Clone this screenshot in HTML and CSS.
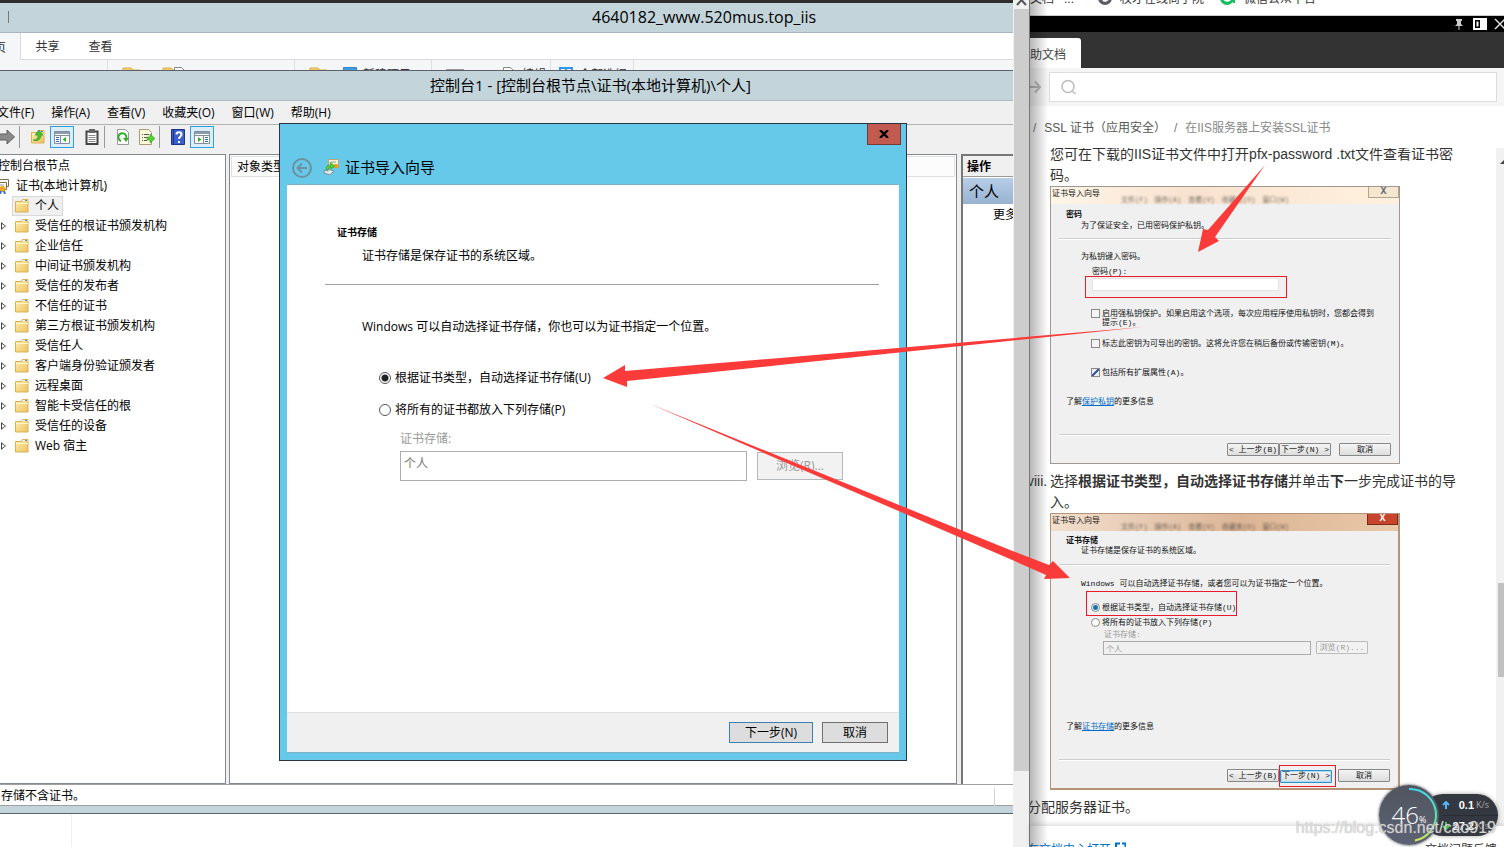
FILE: index.html
```html
<!DOCTYPE html>
<html lang="zh-CN">
<head>
<meta charset="utf-8">
<title>证书导入向导</title>
<link rel="stylesheet" href="styles.css">
</head>
<body>
<svg class="defs" aria-hidden="true">
  <defs>
    <linearGradient id="fold" x1="0" y1="0" x2="1" y2="1"><stop offset="0" stop-color="#fff0b4"/><stop offset="1" stop-color="#ecc25c"/></linearGradient>
    <linearGradient id="ring" x1="0" y1="0" x2="0" y2="1"><stop offset="0" stop-color="#3fd8e8"/><stop offset=".6" stop-color="#5fe3a8"/><stop offset="1" stop-color="#d5e85a"/></linearGradient>
    <symbol id="folder" viewBox="0 0 16 16"><path d="M1.500 3.500h6l1-2h5.500v12.500h-12.500z" fill="url(#fold)" stroke="#d8b15a"/><path d="M9 2.500h4.500" stroke="#fff"/><path d="M11 2.500h2" stroke="#3a8be0"/><path d="M2 5.500h12" stroke="#fff3c4"/></symbol>
    <symbol id="pane" viewBox="0 0 16 16"><path d="M.5 2.500h15v12h-15z" fill="#fff" stroke="#7f8ea3"/><path d="M1 4h14" stroke="#8d9bb0" stroke-width="2"/><path d="M1 6.500h14" stroke="#7f8ea3"/></symbol>
  </defs>
</svg>
<main class="screen">
  <section class="remote">
    <div class="explorer">
      <div class="explorer-title"><i class="tick"></i><span>4640182_www.520mus.top_iis</span></div>
      <nav class="explorer-tabs"><button class="tab-on">页</button><button>共享</button><button>查看</button></nav>
      <div class="ribbon">
        <div class="group g1"></div>
        <div class="group g2"><svg width="20" height="12"><path d="M1 1h8l2 2h7v9h-17z" fill="#f2cf72" stroke="#d9ae44"/></svg><svg width="26" height="12"><path d="M1 1h8l2 2h7v9h-17z" fill="#f2cf72" stroke="#d9ae44"/><path d="M12.500.5h7l4 4v8h-11z" fill="#fff" stroke="#888"/></svg></div>
        <div class="group g3"><svg width="20" height="12"><path d="M1 1h8l2 2h7v9h-17z" fill="#f2cf72" stroke="#d9ae44"/></svg><svg width="14" height="12"><path d="M.5.5h13v11h-13z" fill="#fff" stroke="#3c86bf"/><path d="M1 2h12" stroke="#3c9de0" stroke-width="2"/></svg><span>新建项目</span></div>
        <div class="group g4"><svg width="18" height="12"><path d="M0 3h18" stroke="#999" stroke-width="2"/></svg><svg width="14" height="12"><path d="M1.500.5h7l4 4v8h-11z" fill="#fff" stroke="#888"/></svg><span>编辑</span></div>
        <div class="group g5"><svg width="14" height="12"><path d="M1 1h12v10h-12zM7 1v10" fill="#fff" stroke="#3296ee" stroke-width="2"/></svg><span>全部选择</span></div>
      </div>
      <div class="explorer-body"><i></i></div>
    </div>

    <div class="console">
      <div class="console-title">控制台1 - [控制台根节点\证书(本地计算机)\个人]</div>
      <nav class="menu"><button>文件(F)</button><button>操作(A)</button><button>查看(V)</button><button>收藏夹(O)</button><button>窗口(W)</button><button>帮助(H)</button></nav>
      <div class="toolbar">
        <button class="first" aria-label="前进"><svg width="16" height="16"><path d="M0 5h8V1l7.500 7L8 15v-4H0z" fill="#8a8a8a" stroke="#5e5e5e"/></svg></button><i></i>
        <button aria-label="向上"><svg width="16" height="16"><use href="#folder"/><path d="M3 11c4 0 5-2 5-5h-3l4-5 4 5h-2c0 4-3 7-8 5z" fill="#43c232" stroke="#23881a" stroke-width=".6"/></svg></button>
        <button class="on" aria-label="控制台树"><svg width="16" height="16"><use href="#pane"/><path d="M6.500 7v7" stroke="#7f8ea3"/><path d="M2 8.500h3M2 10.500h3M2 12.500h3" stroke="#3b6db0"/><path d="M12 8v5L8.500 10.500z" fill="#2fae27"/></svg></button>
        <button class="gap" aria-label="剪贴板"><svg width="16" height="16"><path d="M2.500 2.500h11v12.500h-11z" fill="#fff" stroke="#444" stroke-width="2"/><path d="M5 0h6v4H5z" fill="#666"/><path d="M4.500 6.500h7M4.500 8.500h7M4.500 10.500h7M4.500 12.500h7" stroke="#888"/></svg></button><i></i>
        <button aria-label="刷新"><svg width="16" height="16"><path d="M2.500.5h8l3 3v12h-11z" fill="#fff" stroke="#999"/><path d="M6 12a4 4 0 1 1 5-2" fill="none" stroke="#2fae27" stroke-width="2"/><path d="M8 9h6l-3 4z" fill="#2fae27"/></svg></button>
        <button aria-label="导出列表"><svg width="16" height="16"><path d="M.5.5h9l3 3v12H.5z" fill="#fff9dc" stroke="#a59b78"/><path d="M3 5.500h1M5 5.500h5M3 8.500h1M5 8.500h3M3 11.500h1M5 11.500h3" stroke="#555"/><path d="M8 8h3V5l5 4.500-5 4.500v-3H8z" fill="#55d233" stroke="#2a9a1f" stroke-width=".6"/></svg></button><i></i>
        <button aria-label="帮助"><svg width="16" height="16"><path d="M1.500.5h13v15h-13z" fill="#3a5fcd" stroke="#1e3480"/><path d="M3.500 1v14" stroke="#1e3480"/><path d="M6.500 5.500c0-3 5-3 5 0 0 2-2.500 2-2.500 4.500M9 12v2" fill="none" stroke="#fff" stroke-width="2"/></svg></button>
        <button class="on" aria-label="操作窗格"><svg width="16" height="16"><use href="#pane"/><path d="M9.500 7v7" stroke="#7f8ea3"/><path d="M11 8.500h3M11 10.500h3M11 12.500h3" stroke="#3b6db0"/><path d="M4 8v5l3.500-2.500z" fill="#2fae27"/></svg></button>
      </div>
      <div class="panes">
        <ul class="tree">
          <li class="root">控制台根节点</li>
          <li class="store"><svg width="16" height="16"><path d="M5.500 1.500h9v7h-9z" fill="#fff" stroke="#806c48"/><path d="M.5 4.500h12v7H.5z" fill="#fff" stroke="#806c48"/><path d="M3 7h7" stroke="#999"/><circle cx="8.500" cy="11" r="3" fill="#eba623"/><path d="M7 13l-1 3M10 13l1 3" stroke="#2f6de0" stroke-width="2"/></svg>证书(本地计算机)</li>
          <li class="leaf"><span class="sel"><svg width="16" height="16"><use href="#folder"/></svg>个人</span></li>
          <li><b></b><svg width="16" height="16"><use href="#folder"/></svg>受信任的根证书颁发机构</li>
          <li><b></b><svg width="16" height="16"><use href="#folder"/></svg>企业信任</li>
          <li><b></b><svg width="16" height="16"><use href="#folder"/></svg>中间证书颁发机构</li>
          <li><b></b><svg width="16" height="16"><use href="#folder"/></svg>受信任的发布者</li>
          <li><b></b><svg width="16" height="16"><use href="#folder"/></svg>不信任的证书</li>
          <li><b></b><svg width="16" height="16"><use href="#folder"/></svg>第三方根证书颁发机构</li>
          <li><b></b><svg width="16" height="16"><use href="#folder"/></svg>受信任人</li>
          <li><b></b><svg width="16" height="16"><use href="#folder"/></svg>客户端身份验证颁发者</li>
          <li><b></b><svg width="16" height="16"><use href="#folder"/></svg>远程桌面</li>
          <li><b></b><svg width="16" height="16"><use href="#folder"/></svg>智能卡受信任的根</li>
          <li><b></b><svg width="16" height="16"><use href="#folder"/></svg>受信任的设备</li>
          <li><b></b><svg width="16" height="16"><use href="#folder"/></svg>Web 宿主</li>
        </ul>
        <div class="list"><div class="list-head">对象类型</div></div>
        <div class="actions"><div class="actions-head">操作</div><div class="actions-sel">个人</div><button class="more">更多操作</button></div>
      </div>
      <div class="status"><span>存储不含证书。</span><i></i></div>
    </div>

    <div class="wizard" role="dialog" aria-labelledby="wiz">
      <button class="close" aria-label="关闭"><svg width="10" height="8"><path d="M1 0l8 8M9 0l-8 8" stroke="#000" stroke-width="2.400"/></svg></button>
      <header>
        <svg width="20" height="20"><circle cx="10" cy="10" r="9" fill="none" stroke="#6e8f9e" stroke-width="2"/><path d="M15 10H6M10 5.500L5.500 10l4.500 4.500" fill="none" stroke="#6e8f9e" stroke-width="2"/></svg>
        <svg class="cert" width="16" height="16"><path d="M5.500.5h10v8h-10z" fill="#fdf6dc" stroke="#b5a67c"/><path d="M8 3h5" stroke="#999"/><circle cx="13" cy="7" r="2.200" fill="#e8a31f"/><path d="M1 12l4-2 6 2-4 4-6-2z" fill="#dce6ea" stroke="#7a8e98"/><path d="M3 11C3 6 6 5 8 6L7 3l5 4-4 3V8C6 8 5 9 5 12z" fill="#56cf3c" stroke="#2b9222" stroke-width=".6"/></svg>
        <h1 id="wiz">证书导入向导</h1>
      </header>
      <form class="wizard-body">
        <div class="page">
          <h2>证书存储</h2>
          <p class="sub">证书存储是保存证书的系统区域。</p>
          <hr>
          <p class="intro">Windows 可以自动选择证书存储，你也可以为证书指定一个位置。</p>
          <label class="opt"><input type="radio" name="s" checked>根据证书类型，自动选择证书存储(U)</label>
          <label class="opt opt2"><input type="radio" name="s">将所有的证书都放入下列存储(P)</label>
          <div class="where">
            <label for="store">证书存储:</label>
            <div class="where-row"><input id="store" type="text" value="个人" disabled><button type="button" disabled>浏览(R)...</button></div>
          </div>
        </div>
        <footer><button type="button" class="next">下一步(N)</button><button type="button" class="cancel">取消</button></footer>
      </form>
    </div>
  </section>

  <div class="bar"><svg width="15" height="9"><path d="M3 5l4.500-5 4.500 5" fill="none" stroke="#555" stroke-width="2"/></svg><i></i></div>

  <aside class="doc">
    <div class="marks"><span>文档</span><span class="m1">...</span><svg width="14" height="14"><circle cx="7" cy="7" r="7" fill="#5a5d66"/><path d="M5 9c2 2 5 0 6-3" stroke="#fff" fill="none" stroke-width="2"/></svg><span class="m2">权才在线商学院</span><svg width="16" height="14"><circle cx="7" cy="7" r="7" fill="#14bf5f"/><path d="M4 8c2 3 6 2 7-1" stroke="#fff" fill="none" stroke-width="2"/><path d="M14 4v8" stroke="#14bf5f" stroke-width="2"/></svg><span>微信公众平台</span></div>
    <div class="black"><svg width="12" height="12"><path d="M3 1h6v2H8v3l2 2H2l2-2V3H3zM5.500 8h1v4h-1z" fill="#ccc"/></svg><svg width="14" height="12"><path d="M0 0h14v12H0z" fill="#fff"/><path d="M2 2h5v8H2z" fill="#000"/><path d="M3.500 3.500h2v5h-2z" fill="#fff"/></svg><svg width="12" height="12"><path d="M1 1l10 10M11 1L1 11" stroke="#ddd" stroke-width="1.500"/></svg></div>
    <div class="doc-tabs"><button>助文档</button></div>
    <div class="search"><svg width="11" height="14"><path d="M0 7h10M5 1.500L10 7l-5 5.500" fill="none" stroke="#bbb" stroke-width="2"/></svg><label><svg width="16" height="16"><circle cx="7" cy="7.500" r="6" fill="none" stroke="#bbb" stroke-width="1.500"/><path d="M11 12l3.500 3" stroke="#bbb" stroke-width="1.500"/></svg><input type="text" aria-label="搜索"></label></div>
    <nav class="crumbs"><span>/</span><a href="#">SSL 证书（应用安全）</a><span>/</span><span class="here">在IIS服务器上安装SSL证书</span></nav>
    <div class="doc-main">
      <article>
        <p class="step">您可在下载的IIS证书文件中打开pfx-password .txt文件查看证书密码。</p>
        <figure class="thumb t1">
          <div class="thumb-title"><span>证书导入向导</span><em>文件(F)　操作(A)　查看(V)　收藏夹(O)　窗口(W)</em><b>X</b></div>
          <div class="thumb-body">
            <h3>密码</h3><p class="in1">为了保证安全，已用密码保护私钥。</p><hr>
            <p class="in1 key">为私钥键入密码。</p>
            <label class="in2 pw" for="pw">密码(P):</label>
            <div class="red pwbox"><input id="pw" type="password"></div>
            <label class="check c1"><input type="checkbox"><span>启用强私钥保护。如果启用这个选项，每次应用程序使用私钥时，您都会得到<br>提示(E)。</span></label>
            <label class="check c2"><input type="checkbox"><span>标志此密钥为可导出的密钥。这将允许您在稍后备份或传输密钥(M)。</span></label>
            <label class="check c3"><input type="checkbox" checked><span>包括所有扩展属性(A)。</span></label>
            <p class="learn">了解<a href="#">保护私钥</a>的更多信息</p><hr class="low">
            <div class="thumb-btns"><button>&lt; 上一步(B)</button><button>下一步(N) &gt;</button><button class="c">取消</button></div>
          </div>
        </figure>
        <p class="step item"><span class="num">viii.</span>选择<strong>根据证书类型，自动选择证书存储</strong>并单击<strong>下</strong>一步完成证书的导入。</p>
        <figure class="thumb t2">
          <div class="thumb-title"><span>证书导入向导</span><em>文件(F)　操作(A)　查看(V)　收藏夹(O)　窗口(W)</em><b>X</b></div>
          <div class="thumb-body">
            <h3>证书存储</h3><p class="in1">证书存储是保存证书的系统区域。</p><hr>
            <p class="in1 key">Windows 可以自动选择证书存储，或者您可以为证书指定一个位置。</p>
            <div class="red rbox"><label class="check"><input type="radio" name="t" checked><span>根据证书类型，自动选择证书存储(U)</span></label></div>
            <label class="check r2"><input type="radio" name="t"><span>将所有的证书放入下列存储(P)</span></label>
            <label class="in3" for="st2">证书存储:</label>
            <div class="st-row"><input id="st2" type="text" value="个人" disabled><button disabled>浏览(R)...</button></div>
            <p class="learn">了解<a href="#">证书存储</a>的更多信息</p><hr class="low">
            <div class="thumb-btns"><button>&lt; 上一步(B)</button><span class="red"><button class="def">下一步(N) &gt;</button></span><button>取消</button></div>
          </div>
        </figure>
        <p class="step last">分配服务器证书。</p>
      </article>
      <div class="doc-scroll"><i></i></div>
    </div>
    <footer class="doc-foot"><a href="#">在文档中心打开 <svg width="11" height="11"><path d="M5 1.500H1v9h9V7M7 1.500h3.500V5" fill="none" stroke="#0070cc" stroke-width="2"/></svg></a><span>文档问题反馈</span></footer>
  </aside>

  <svg class="arrows" width="1504" height="847" aria-hidden="true"><g fill="#fb3a3a"><path d="M1265 165L1208 230l-5-1-5 23 21-11-4-4z"/><path d="M1143 327L780 358l-155 13v-6l-22 13 24 9v-6l153-16z"/><path d="M649 403.500L1010 550l39 15 4-4 17 17-26 1 2-4-36-16z"/></g></svg>

  <div class="meter">
    <div class="dial"><svg width="60" height="60"><path d="M30 4A26 26 0 0 1 36 55.500" fill="none" stroke="url(#ring)" stroke-width="2"/></svg><span>46</span><small>%</small></div>
    <div class="rates"><div><svg width="8" height="8"><path d="M4 8V1M1 4l3-3 3 3" fill="none" stroke="#4fb8ff" stroke-width="2"/></svg><b>0.1</b><small>K/s</small></div><div><svg width="8" height="8"><path d="M4 0v7M1 4l3 3 3-3" fill="none" stroke="#3ecf3e" stroke-width="2"/></svg><b>27.2</b><small>K/s</small></div></div>
  </div>
  <div class="mark">https://blog.csdn.net/cao919</div>
</main>
</body>
</html>
```

FILE: styles.css
```css
* { box-sizing: border-box; }
body { margin: 0; background: #fff; color: #000; font: 12px/16px "Open Sans", "Noto Sans CJK SC", sans-serif; }
h1, h2, h3, p, ul, figure, hr { margin: 0; padding: 0; }
button, input { font: inherit; color: inherit; margin: 0; padding: 0; }
button { border: 0; background: none; white-space: nowrap; }
svg { display: block; flex: none; }
.defs { position: absolute; width: 0; height: 0; }
.screen { position: relative; display: flex; height: 100vh; overflow: hidden; }

/* remote desktop */
.remote { position: relative; flex: 1; min-width: 0; overflow: hidden; background: #2e2e2e; }
.explorer { height: 100%; padding-top: 3px; display: flex; flex-direction: column; }
.explorer-title { position: relative; flex: none; height: 30px; padding-left: 592px; background: #c3d5db; border-bottom: 1px solid #a9b6bf; font-size: 16px; line-height: 28px; }
.tick { position: absolute; left: 8px; top: 8px; width: 1px; height: 12px; background: #777; }
.explorer-tabs { display: flex; flex: none; height: 27px; background: #fff; border-bottom: 1px solid #d8dadc; color: #333; }
.explorer-tabs button { width: 53px; padding-top: 2px; }
.explorer-tabs .tab-on { display: flex; justify-content: flex-end; align-items: center; width: 21px; height: 27px; padding-right: 14px; background: #f5f6f7; border-right: 1px solid #d8dadc; }
.ribbon { display: flex; flex: none; height: 11px; overflow: hidden; background: #f5f6f7; color: #333; }
.group { display: flex; gap: 6px; padding: 7px 0 0 14px; border-right: 1px solid #dcdfe3; line-height: 16px; }
.group span { white-space: nowrap; }
.g1 { width: 108px; }
.g2 { width: 187px; gap: 20px; }
.g3 { width: 137px; gap: 14px; }
.g3 span { margin-left: -8px; }
.g4 { width: 119px; }
.g4 svg + svg { margin-left: 32px; }
.g5 { width: 83px; padding-left: 8px; }
.explorer-body { flex: 1; display: flex; background: #fff; }
.explorer-body i { width: 72px; border-right: 1px solid #f0f0f2; }

.console { position: absolute; left: 0; right: 0; top: 70px; bottom: 33px; display: flex; flex-direction: column; background: #f0f0f0; border-top: 1px solid #5d606b; border-bottom: 1px solid #53646c; }
.console-title { flex: none; height: 30px; padding-left: 430px; background: #c3d5db; border-bottom: 1px solid #adb9c3; font-size: 15px; line-height: 29px; white-space: nowrap; }
.menu { display: flex; flex: none; gap: 17px; height: 24px; margin-left: -3px; border-bottom: 1px solid #b2b2b2; }
.toolbar { display: flex; flex: none; height: 29px; padding-top: 1px; }
.toolbar button { display: flex; width: 24px; height: 22px; align-items: center; justify-content: center; }
.toolbar .first { margin-left: -5px; }
.toolbar .gap { margin-left: 6px; }
.toolbar i { width: 1px; height: 22px; margin-right: 6px; background: #999; }
.toolbar .on { background: #dcedf8; border: 1px solid #2da0dd; }
.panes { display: flex; flex: 1; gap: 3px; min-height: 0; }
.tree { width: 226px; flex: none; padding-top: 1px; list-style: none; background: #fff; border: solid #828790; border-width: 1px 1px 1px 0; }
.tree li { display: flex; height: 20px; align-items: center; gap: 5px; padding-left: 1px; white-space: nowrap; }
.tree li.root { margin-left: -3px; }
.tree li.store { margin-left: -7px; gap: 6px; }
.tree li.leaf { padding-left: 12px; }
.tree b { width: 8px; height: 8px; background: #444; clip-path: polygon(0 0, 5px 4px, 0 8px, 0 0, 1px 2px, 1px 6px, 4px 4px, 1px 2px); }
.sel { display: flex; gap: 5px; align-items: center; height: 20px; padding: 0 3px 0 1px; background: #f0f0f0; border: 1px solid #d9d9d9; }
.list { flex: 1; background: #fff; border: 1px solid #828790; padding: 1px; }
.list-head { height: 21px; padding-left: 5px; border: 1px solid #e0e0e0; background: #fcfcfc; line-height: 20px; }
.actions { width: 52px; flex: none; margin-left: 1px; overflow: hidden; background: #fff; border: solid #777; border-width: 2px 0 0 2px; }
.actions-head { height: 21px; padding-left: 4px; background: #f0f0f0; border-bottom: 1px solid #999; font-weight: bold; line-height: 22px; }
.actions-sel { height: 26px; margin-top: 1px; padding-left: 6px; background: linear-gradient(#b6cee8, #98b2d0); font-size: 15px; line-height: 26px; }
.more { margin: 3px 0 0 30px; }
.status { display: flex; flex: none; justify-content: space-between; height: 29px; padding: 3px 18px 0 1px; background: #fff; border-top: 1px solid #a0a0a0; border-bottom: 7px solid #c3d5db; box-shadow: inset 0 -1px #a0a0a0; }
.status i { width: 1px; background: #d5d5d5; }

.wizard { position: absolute; left: 279px; top: 123px; width: 628px; height: 638px; display: flex; flex-direction: column; padding: 0 7px 7px; background: #66c9ea; border: 1px solid #2b3440; }
.wizard header { display: flex; height: 60px; align-items: flex-end; padding: 0 0 6px 5px; }
.cert { margin: 0 6px 3px 11px; }
.wizard h1 { font-size: 15px; line-height: 22px; font-weight: normal; }
.close { position: absolute; right: 5px; top: 0; width: 34px; height: 21px; display: grid; place-items: center; background: #c25a50; border: 1px solid #723c3a; border-top: 0; }
.wizard-body { flex: 1; display: flex; flex-direction: column; background: #fff; border: solid #7fb0c6; border-width: 1px 0; }
.page { flex: 1; padding: 39px 20px 0 38px; }
.page h2 { margin-left: 12px; font-size: 10px; line-height: 16px; }
.page .sub { margin: 8px 0 20px 37px; }
.page hr { border: 0; border-top: 1px solid #a0a0a0; }
.page .intro { margin: 34px 0 35px 37px; }
.opt { display: flex; align-items: center; gap: 4px; margin-left: 54px; }
.opt2 { margin-top: 16px; }
input[type="radio"] { appearance: none; flex: none; width: 12px; height: 12px; border: 1px solid #555; border-radius: 50%; background: #fff; }
input[type="radio"]:checked { background: radial-gradient(circle, #222 0 3px, #fff 4px); }
.where { margin: 13px 0 0 75px; color: #999; }
.where > label { display: block; }
.where-row { display: flex; align-items: center; gap: 10px; margin-top: 4px; }
.where-row input { width: 347px; height: 30px; padding: 0 3px 6px; border: 1px solid #abadb3; background: #fff; color: #777; }
.where-row button { width: 86px; height: 28px; border: 1px solid #b5b8bb; background: #f2f2f2; color: #999; }
.wizard-body footer { display: flex; justify-content: flex-end; gap: 9px; height: 40px; padding: 9px 11px; background: #f0f0f0; border-top: 1px solid #dfdfdf; }
.wizard-body footer button { width: 66px; height: 21px; background: #ddd; border: 1px solid #707070; }
.wizard-body footer .next { width: 84px; border-color: #3c7fb1; }

.bar { flex: none; width: 17px; padding-left: 1px; display: flex; flex-direction: column; background: #f0f0f0; border-right: 1px solid #777; }
.bar i { height: 90%; background: #cdcdcd; }

/* documentation panel */
.doc { position: relative; flex: none; width: 474px; display: flex; flex-direction: column; background: #fff; font-family: "Liberation Sans", "Noto Sans CJK SC", sans-serif; }
.doc::before { content: ""; position: absolute; inset: 0 auto 0 0; width: 18px; background: linear-gradient(90deg, #00000048, #0000); }
.marks { display: flex; flex: none; height: 16px; overflow: hidden; border-bottom: 1px solid #ccc; color: #333; }
.marks > * { margin: -9px 8px 0 0; white-space: nowrap; }
.marks .m1 { margin-left: 2px; margin-right: 24px; }
.marks .m2 { margin-right: 16px; }
.black { display: flex; flex: none; gap: 8px; justify-content: flex-end; align-items: center; height: 16px; background: #000; }
.black svg:last-child { margin: 0 -2px 0 -1px; }
.doc-tabs { display: flex; flex: none; height: 36px; padding-top: 6px; background: #333; }
.doc-tabs button { display: flex; justify-content: flex-end; align-items: center; width: 51px; padding: 3px 15px 0 0; background: #fff; border-radius: 0 3px 0 0; color: #444; }
.search { display: flex; flex: none; height: 38px; padding: 4px 7px 4px 0; gap: 8px; align-items: center; background: #f5f5f5; }
.search label { flex: 1; display: flex; align-items: center; height: 30px; padding-left: 11px; background: #fff; border: 1px solid #ddd; }
.search input { flex: 1; border: 0; outline: 0; }
.crumbs { display: flex; flex: none; height: 42px; padding-top: 2px; align-items: center; gap: 8px; padding-left: 3px; color: #777; white-space: nowrap; }
.crumbs a { color: #555; text-decoration: none; }
.crumbs .here { color: #888; }
.doc-main { flex: 1; min-height: 0; display: flex; overflow: hidden; }
article { flex: 1; padding: 0 38px 0 20px; margin-top: -4px; }
.step { position: relative; font-size: 14px; line-height: 21px; color: #333; word-break: break-all; }
.item { margin-top: 7px; }
.num { position: absolute; left: -23px; }
.last { margin: 7px 0 0 -23px; }
.doc-scroll { width: 8px; background: #f1f1f1; display: flex; flex-direction: column; }
.doc-scroll::before { content: ""; margin: 8px 0 0 4px; border: solid transparent; border-width: 0 4px 4px; border-bottom-color: #444; height: 4px; }
.doc-scroll i { height: 94px; margin: 419px 0 0 2px; background: #c1c1c1; }
.doc-foot { display: flex; flex: none; justify-content: space-between; height: 21px; padding: 16px 7px 0 0; overflow: hidden; box-shadow: 0 -2px 5px #0002; background: #fff; white-space: nowrap; }
.doc-foot a { display: flex; gap: 4px; margin-left: -3px; color: #0070cc; text-decoration: none; }
.doc-foot span { color: #333; }

.thumb { width: 350px; border: 1px solid #a09890; color: #111; font: 8px/10px "Liberation Mono", "Noto Sans CJK SC", monospace; background: #f0f0f0; white-space: nowrap; }
.thumb-title { position: relative; display: flex; height: 17px; padding: 2px 1px; background: linear-gradient(90deg, #fff6e8, #f8e2cf 40%, #fff1df); }
.thumb-title em { position: absolute; left: 70px; top: 8px; height: 9px; overflow: hidden; font-size: 7px; font-style: normal; filter: blur(1px); opacity: .6; }
.thumb-title b { position: absolute; right: 0; top: 0; width: 31px; height: 11px; background: #f5e6d0; border: 1px solid #b5a48c; border-top: 0; text-align: center; font-size: 10px; color: #667; }
.t2 { border-color: #b59478; border-width: 1px 2px 2px 1px; }
.t2 .thumb-title { background: linear-gradient(90deg, #f2dfcd, #dcb596 55%, #e8c8a8); }
.t2 .thumb-title b { background: #c8442c; border-color: #7a2a1c; color: #fff; }
.thumb-body { padding: 6px 8px 7px; }
.thumb h3 { margin-left: 7px; font-size: 8px; line-height: 10px; }
.thumb hr { margin-top: 7px; border: 0; border-top: 1px solid #ccc; border-bottom: 1px solid #fff; }
.thumb label { display: block; }
.in1 { margin: 1px 0 0 22px; }
.key { margin-top: 12px; }
.in2 { margin-left: 33px; }
.pw { margin-top: 5px; }
.red { border: 1px solid #e81b2a; }
.pwbox { width: 202px; height: 22px; margin: -1px 0 0 26px; padding: 1px 8px 0 6px; }
.pwbox input { display: block; width: 187px; height: 13px; border: 1px solid #e4e4e4; background: #fff; }
.thumb .check { display: flex; gap: 2px; margin-left: 32px; line-height: 9px; }
.check input { flex: none; width: 9px; height: 9px; }
.check input[type="radio"] { border-color: #888; }
.check input[type="checkbox"] { appearance: none; border: 1px solid #888; background: #f4f4f4; }
.check input[type="checkbox"]:checked { background: linear-gradient(135deg, #e8eef8 40%, #3a5ba0 40% 60%, #e8eef8 60%); }
.thumb .c1 { margin-top: 11px; }
.thumb .c2 { margin-top: 12px; }
.thumb .c3 { margin-top: 20px; }
.learn { margin: 20px 0 0 7px; }
.learn a { color: #0069c8; }
.thumb .low { margin-top: 27px; }
.thumb-btns { display: flex; justify-content: flex-end; align-items: center; margin-top: 7px; height: 13px; }
.thumb button { width: 52px; height: 13px; overflow: hidden; background: linear-gradient(#f5f5f5, #ddd); border: 1px solid #888; border-radius: 1px; }
.thumb-btns > :last-child { margin-left: 8px; }
.t2 .thumb-body { padding-top: 5px; padding-bottom: 6px; }
.t2 .in1 { margin-top: 0; }
.t2 .in1 + hr { margin-top: 8px; }
.t2 .key { margin-top: 13px; }
.rbox { width: 151px; height: 25px; margin: 2px 0 0 27px; padding-top: 11px; }
.thumb .rbox .check { margin-left: 4px; }
.rbox .check input:checked { background: radial-gradient(circle, #1f6fa8 0 2px, #dff 3px); }
.thumb .r2 { margin-top: 2px; }
.in3 { margin: 3px 0 0 45px; color: #999; }
.st-row { display: flex; gap: 5px; margin: 1px 0 0 44px; color: #999; }
.st-row input { width: 208px; height: 14px; padding: 0 2px; border: 1px solid #aaa; background: #f0f0f0; }
.t2 .st-row button { border-color: #bbb; background: #f2f2f2; }
.t2 .learn { margin-top: 67px; }
.t2 .thumb-btns .red { margin-right: -6px; padding: 4px 3px 3px 0; }
.t2 .thumb-btns { margin-top: 8px; }
.t2 .red button { display: block; border: 1px solid #2b90c8; box-shadow: inset 0 0 1px 1px #a8dcf4; }

/* overlays */
.arrows { position: absolute; left: 0; top: 0; pointer-events: none; }
.meter { position: absolute; right: 6px; bottom: 2px; display: flex; align-items: center; font-family: "Open Sans", sans-serif; color: #fff; }
.dial { position: relative; z-index: 1; width: 60px; height: 60px; display: flex; align-items: center; justify-content: center; border-radius: 50%; background: linear-gradient(#50555f, #5c6274); box-shadow: 0 0 3px #333; }
.dial svg { position: absolute; inset: 0; }
.dial span { font-size: 24px; font-weight: 300; }
.dial small { margin-top: 10px; font-size: 9px; }
.rates { width: 76px; margin-left: -17px; padding-left: 20px; border-radius: 21px; background: #343840; box-shadow: 0 0 4px #5558; }
.rates div { display: flex; align-items: center; gap: 2px; height: 21px; }
.rates div + div { border-top: 1px solid #292c33; }
.rates b { flex: 1; text-align: right; font: 11px/14px "Liberation Sans", sans-serif; font-weight: bold; }
.rates small { width: 22px; font-size: 9px; color: #aaa; }
.mark { position: absolute; right: 8px; bottom: 10px; z-index: 2; font: 16px/18px "Liberation Sans", sans-serif; color: #ffffffa0; text-shadow: 0 0 1px #999; }
```
